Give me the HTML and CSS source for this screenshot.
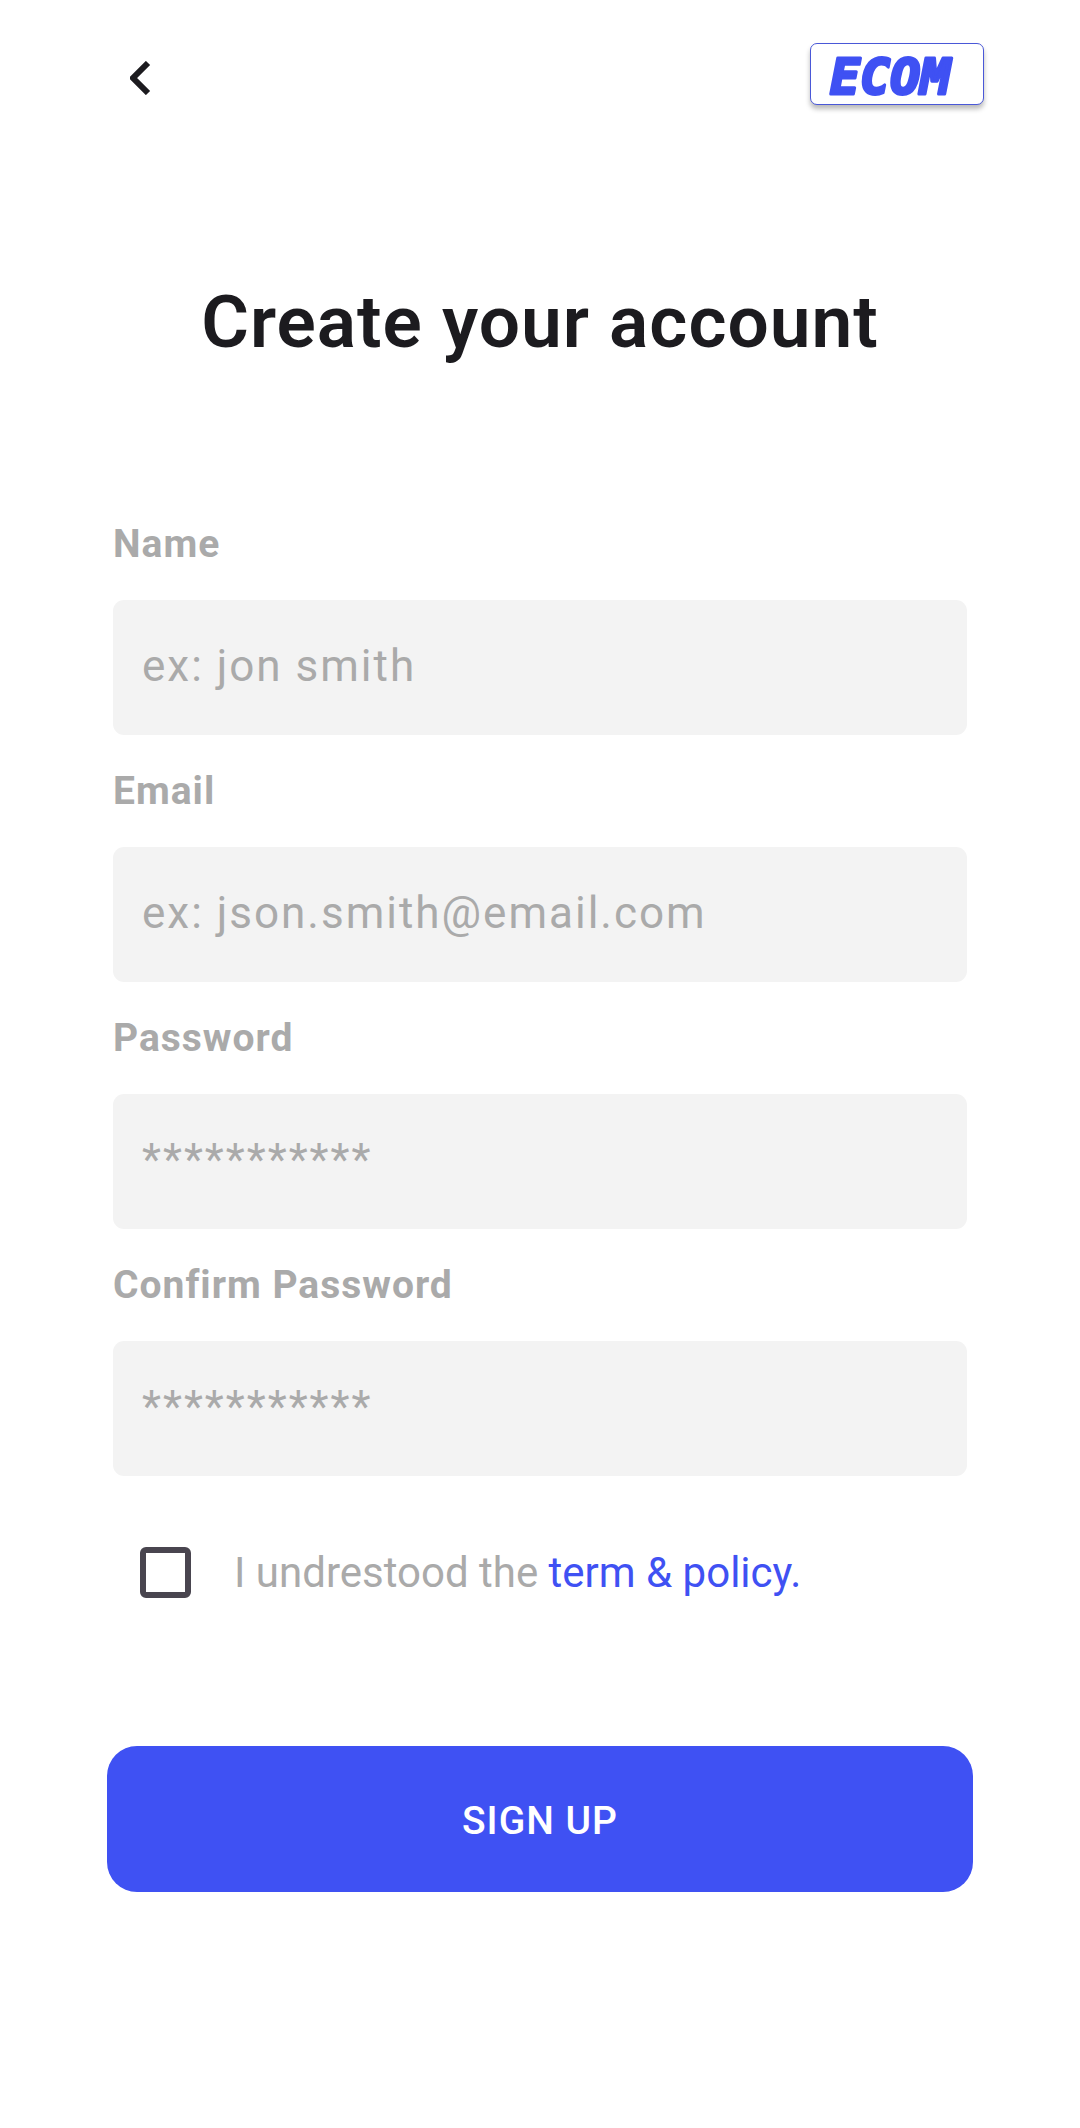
FILE: index.html
```html
<!DOCTYPE html>
<html lang="en">
<head>
<meta charset="utf-8">
<meta name="viewport" content="width=device-width, initial-scale=1">
<title>Create your account</title>
<link rel="stylesheet" href="styles.css">
</head>
<body>
<header class="topbar">
  <button class="back" type="button" aria-label="Back">
    <svg class="back-icon" viewBox="0 0 22 34"><path d="M18 2 3 17l15 15" fill="none" stroke="#1c1b1f" stroke-width="6"/></svg>
  </button>
  <div class="logo">
    <svg class="logo-mark" viewBox="0 0 172 60" role="img" aria-label="ECOM"><text class="logo-text" x="19" y="50">ECOM</text></svg>
  </div>
</header>
<main>
  <h1 class="title">Create your account</h1>
  <form class="form">
    <div class="field">
      <label class="label" for="name">Name</label>
      <input class="input" id="name" type="text" placeholder="ex: jon smith">
    </div>
    <div class="field">
      <label class="label" for="email">Email</label>
      <input class="input" id="email" type="email" placeholder="ex: json.smith@email.com">
    </div>
    <div class="field">
      <label class="label" for="password">Password</label>
      <input class="input" id="password" type="password" placeholder="***********">
    </div>
    <div class="field">
      <label class="label" for="confirm">Confirm Password</label>
      <input class="input" id="confirm" type="password" placeholder="***********">
    </div>
    <div class="terms">
      <input class="check" id="terms" type="checkbox">
      <label for="terms">I undrestood the <a class="link" href="#terms">term &amp; policy.</a></label>
    </div>
    <button class="submit" type="submit">SIGN UP</button>
  </form>
</main>
</body>
</html>
```
FILE: styles.css
```css
* { box-sizing: border-box; }
body {
  margin: 0;
  background: #fff;
  color: #1c1b1f;
  font-family: Roboto, "Liberation Sans", sans-serif;
}
.topbar {
  display: flex;
  justify-content: space-between;
  align-items: flex-start;
  padding: 43px 96px 0 112px;
}
.back {
  display: flex;
  padding: 18px;
  border: 0;
  background: none;
}
.back-icon { width: 22px; height: 34px; }
.logo {
  width: 174px;
  border: 1px solid #4a58d8;
  border-radius: 7px;
  background: #fff;
  box-shadow: 0 4px 5px #bbb;
}
.logo-mark { display: block; width: 100%; overflow: visible; }
.logo-text {
  fill: #3f51f3;
  stroke: #3f51f3;
  stroke-width: 3px;
  stroke-linejoin: round;
  font: italic 700 50px "DejaVu Sans Mono", monospace;
}
.title {
  margin: 161px 0 0;
  text-align: center;
  font-size: 73px;
  line-height: 96px;
  font-weight: 600;
  letter-spacing: 1px;
}
.form {
  display: flex;
  flex-direction: column;
  margin: 134px 113px 0;
}
.field { display: flex; flex-direction: column; }
.label {
  height: 96px;
  padding-top: 20px;
  color: #aaa;
  font-size: 39px;
  line-height: 40px;
  font-weight: 700;
  letter-spacing: 1px;
}
.input {
  width: 100%;
  height: 135px;
  margin-bottom: 16px;
  padding: 0 29px 4px;
  border: 0;
  border-radius: 11px;
  background: #f3f3f3;
  font: 400 44px/56px Roboto, sans-serif;
  letter-spacing: 2px;
}
.input::placeholder { color: #aaa; opacity: 1; }
.terms {
  display: flex;
  align-items: center;
  gap: 43px;
  margin-top: 40px;
  padding-left: 27px;
  height: 80px;
  color: #aaa;
  font-size: 42px;
}
.check {
  appearance: none;
  width: 51px;
  height: 51px;
  margin: 0;
  border: 6px solid #49454f;
  border-radius: 6px;
}
.link { color: #3f51f3; text-decoration: none; }
.submit {
  height: 146px;
  margin: 134px -6px 0;
  padding-top: 4px;
  border: 0;
  border-radius: 30px;
  background: #3f51f3;
  color: #fff;
  font: 500 39px/46px Roboto, sans-serif;
  letter-spacing: 1px;
}
```
